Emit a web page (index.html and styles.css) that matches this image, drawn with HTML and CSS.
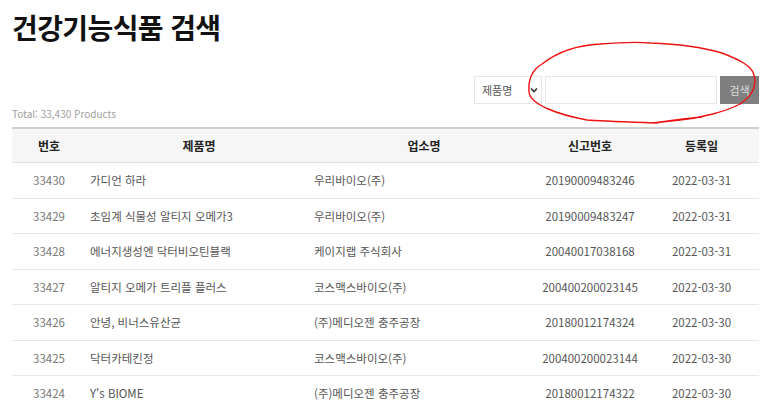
FILE: index.html
```html
<!DOCTYPE html>
<html lang="ko">
<head>
  <meta charset="UTF-8">
  <meta name="viewport" content="width=device-width, initial-scale=1.0">
  <title>건강기능식품 검색</title>
  <link rel="stylesheet" href="styles.css">
</head>
<body>
  <div class="page">
    <h1>건강기능식품 검색</h1>

    <form class="search">
      <div class="select-box">
        <span>제품명</span>
        <svg class="caret" width="8" height="6" viewBox="0 0 8 6"><path d="M1 1.5 L4 4.5 L7 1.5" fill="none" stroke="#333" stroke-width="1.6"/></svg>
      </div>
      <input type="text" class="keyword">
      <button type="button" class="btn">검색</button>
      <!-- 빨간 펜 표시 -->
      <svg class="scribble" width="260" height="95" viewBox="520 36 260 95">
        <path d="M702 117 C690 118 668 121 652 123 M657 123 C630 122 600 121 587 120 C560 115 530 105 529 92 C528 80 532 70 542 64 C560 50 580 45 600 44 C625 42 640 42 650 43 C680 44 705 48 722 53 C740 60 752 66 754 75 C757 86 752 96 740 104 C725 112 700 118 680 120 C670 121 660 122 655 123" fill="none" stroke="#e11" stroke-width="1.4" stroke-linecap="round"/>
      </svg>
    </form>

    <div class="total">Total: 33,430 Products</div>

    <table class="list">
      <thead>
        <tr>
          <th class="c-no">번호</th>
          <th class="c-name">제품명</th>
          <th class="c-comp">업소명</th>
          <th class="c-reg">신고번호</th>
          <th class="c-date">등록일</th>
        </tr>
      </thead>
      <tbody>
        <tr><td class="c-no">33430</td><td class="left">가디언 하라</td><td class="left">우리바이오(주)</td><td>20190009483246</td><td>2022-03-31</td></tr>
        <tr><td class="c-no">33429</td><td class="left">초임계 식물성 알티지 오메가3</td><td class="left">우리바이오(주)</td><td>20190009483247</td><td>2022-03-31</td></tr>
        <tr><td class="c-no">33428</td><td class="left">에너지생성엔 닥터비오틴블랙</td><td class="left">케이지랩 주식회사</td><td>20040017038168</td><td>2022-03-31</td></tr>
        <tr><td class="c-no">33427</td><td class="left">알티지 오메가 트리플 플러스</td><td class="left">코스맥스바이오(주)</td><td>200400200023145</td><td>2022-03-30</td></tr>
        <tr><td class="c-no">33426</td><td class="left">안녕, 비너스유산균</td><td class="left">(주)메디오젠 충주공장</td><td>20180012174324</td><td>2022-03-30</td></tr>
        <tr><td class="c-no">33425</td><td class="left">닥터카테킨정</td><td class="left">코스맥스바이오(주)</td><td>200400200023144</td><td>2022-03-30</td></tr>
        <tr><td class="c-no">33424</td><td class="left">Y's BIOME</td><td class="left">(주)메디오젠 충주공장</td><td>20180012174322</td><td>2022-03-30</td></tr>
      </tbody>
    </table>
  </div>
</body>
</html>
```

FILE: styles.css
```css
body {
  margin: 0;
  font-family: "Noto Sans CJK KR", "Noto Sans", sans-serif;
  background: #fff;
  color: #333;
}
.page {
  padding: 8px 14px 0 12px;
}
h1 {
  margin: 0;
  font-size: 28px;
  line-height: 38px;
  font-weight: bold;
  color: #111;
  letter-spacing: -0.6px;
}
.search {
  position: relative;
  display: flex;
  justify-content: flex-end;
  margin-top: 30px;
  height: 28px;
}
.select-box {
  width: 56px;
  height: 26px;
  border: 1px solid #e6e6e6;
  display: flex;
  align-items: center;
  justify-content: space-between;
  padding: 0 3px 0 7px;
  box-sizing: content-box;
  font-size: 11px;
  color: #555;
}
.keyword {
  width: 170px;
  height: 26px;
  margin: 0 0 0 3px;
  padding: 0;
  border: 1px solid #e6e6e6;
  box-sizing: content-box;
  outline: none;
}
.btn {
  width: 39px;
  height: 28px;
  margin-left: 3px;
  border: 0;
  background: #7f7f7f;
  color: #ddd;
  font-family: inherit;
  font-size: 11px;
  padding: 0;
}
.scribble {
  position: absolute;
  left: 508px;
  top: -40px;
  pointer-events: none;
}
.total {
  margin-top: 1px;
  font-size: 10px;
  line-height: 18px;
  color: #a0a0a0;
}
.list {
  width: 747px;
  margin-top: 4px;
  border-collapse: collapse;
  border-top: 2px solid #cfcfcf;
  table-layout: fixed;
}
.list th {
  height: 33px;
  background: #f6f6f6;
  font-size: 12px;
  font-weight: bold;
  color: #222;
  border-bottom: 1px solid #e2e2e2;
  padding: 0;
}
.list td {
  height: 34.5px;
  font-size: 11.5px;
  color: #555;
  text-align: center;
  border-bottom: 1px solid #e6e6e6;
  padding: 0;
}
.list td.c-no {
  color: #777;
}
.list td.left {
  text-align: left;
  padding-left: 4px;
}
.list td.left + td.left {
  padding-left: 2px;
}
.c-no { width: 74px; }
.c-name { width: 226px; }
.c-comp { width: 224px; }
.c-reg { width: 108px; }
.c-date { width: auto; }
```
